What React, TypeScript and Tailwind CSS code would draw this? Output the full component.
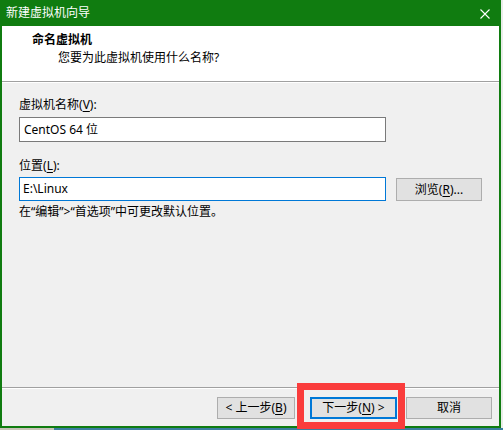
import React from 'react';

const font = "font-['Noto_Sans','Noto_Sans_CJK_SC',sans-serif]";

const Key = ({ k }: { k: string }) => (
  <>
    (<span className="underline underline-offset-2">{k}</span>)
  </>
);

const Btn = ({ children, w, focused }: { children: React.ReactNode; w: string; focused?: boolean }) => (
  <button
    className={`${w} h-[22px] flex items-center justify-center bg-[#e1e1e1] text-[12px] text-black leading-none ${
      focused ? 'border-2 border-[#0078d7]' : 'border border-[#adadad]'
    }`}
  >
    {children}
  </button>
);

export default function App() {
  return (
    <div className={`relative w-[503px] h-[430px] flex flex-col overflow-hidden bg-[#e6ebe6] ${font}`}>
      <div className="flex h-[428px]">
        <div className="w-[501px] h-[428px] flex flex-col border-x-2 border-b-2 border-[#107c10]">
          {/* title bar */}
          <div className="h-[26px] shrink-0 bg-[#107c10] flex items-center justify-between pl-[4px] pr-[9px]">
            <span className="text-white text-[12px] leading-[16px]">新建虚拟机向导</span>
            <svg width="10" height="10" viewBox="0 0 10 10" className="mt-[1px]">
              <path d="M0.5 0.5 L9.5 9.5 M9.5 0.5 L0.5 9.5" stroke="white" strokeWidth="1.1" />
            </svg>
          </div>

          {/* header */}
          <div className="h-[55px] shrink-0 bg-white pt-[6px] text-[12px] leading-[16px] text-black">
            <div className="pl-[30px] font-bold">命名虚拟机</div>
            <div className="pl-[56px] mt-[2px]">您要为此虚拟机使用什么名称?</div>
          </div>
          <div className="h-px bg-[#a0a0a0]" />
          <div className="h-px bg-white" />

          {/* body */}
          <div className="h-[304px] shrink-0 bg-[#f0f0f0] pl-[17px] pt-[14px] text-[12px] leading-[16px] text-black">
            <div>
              虚拟机名称<Key k="V" />:
            </div>
            <div className="mt-[4px] w-[367px] h-[25px] bg-white border border-[#7a7a7a] flex items-center pl-[4px]">
              CentOS 64 位
            </div>
            <div className="mt-[16px]">
              位置<Key k="L" />:
            </div>
            <div className="mt-[3px] flex items-start">
              <div className="w-[367px] h-[24px] bg-white border border-[#0078d7] flex items-center pl-[3px]">
                E:\Linux
              </div>
              <button className="ml-[10px] mt-px w-[86px] h-[23px] bg-[#e1e1e1] border border-[#adadad] flex items-center justify-center">
                浏览<Key k="R" />...
              </button>
            </div>
            <div className="mt-[3px]">在“编辑”&gt;“首选项”中可更改默认位置。</div>
          </div>
          <div className="h-px bg-[#a0a0a0]" />
          <div className="h-px bg-white" />

          {/* footer */}
          <div className="flex-1 bg-[#f0f0f0] flex justify-end items-start pt-[8px] pr-[7px]">
            <Btn w="w-[78px]">
              &lt; 上一步<Key k="B" />
            </Btn>
            <div className="w-[15px]" />
            <Btn w="w-[87px]" focused>
              下一步<Key k="N" /> &gt;
            </Btn>
            <div className="w-[9px]" />
            <Btn w="w-[86px]">取消</Btn>
          </div>
        </div>
        <div className="flex-1 bg-[#e9ede9]" />
      </div>
      <div className="h-[2px] flex">
        <div className="w-[54px] bg-[#c8c4b8]" />
        <div className="flex-1 bg-[#3b7ea0]" />
      </div>

      {/* red highlight */}
      <div className="absolute left-[297px] top-[383px] w-[108px] h-[46px] border-[7px] border-[#fa3c3c]" />
    </div>
  );
}
